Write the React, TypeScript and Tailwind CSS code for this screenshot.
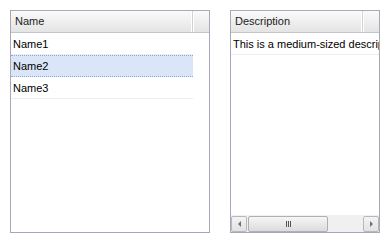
import React from "react";

const font = { fontFamily: '"Liberation Sans", Arial, sans-serif' };

const HeaderCell: React.FC<{ label: string; width: string }> = ({ label, width }) => (
  <div
    className={`${width} h-full shrink-0 flex items-center pl-[4px] border-r border-r-[#d0d0d8] text-[11px] text-[#222] shadow-[inset_-1px_0_0_#ffffff]`}
  >
    {label}
  </div>
);

const GridHeader: React.FC<{ label: string; width: string }> = ({ label, width }) => (
  <div className="h-[22px] shrink-0 flex border-b border-b-[#c4c4cc] bg-gradient-to-b from-[#fafafa] to-[#e4e4e4]">
    <HeaderCell label={label} width={width} />
    <div className="flex-1 border-l border-l-white" />
  </div>
);

const rows = ["Name1", "Name2", "Name3"];

export default function App() {
  return (
    <div className="w-[390px] h-[243px] bg-white flex gap-[20px] pt-[10px] pl-[10px]" style={font}>
      {/* Names grid */}
      <div className="w-[200px] h-[223px] border border-[#a8a8b8] flex flex-col overflow-hidden">
        <GridHeader label="Name" width="w-[182px]" />
        <div className="w-[182px]">
          {rows.map((r) => {
            const selected = r === "Name2";
            return (
              <div
                key={r}
                className={
                  selected
                    ? "h-[22px] flex items-center pl-[2px] text-[11px] text-black bg-[#dae6f8] border-y border-dotted border-[#8fa8d8]"
                    : "h-[22px] flex items-center pl-[2px] text-[11px] text-black border-t border-t-white border-b border-b-[#ededed]"
                }
              >
                {r}
              </div>
            );
          })}
        </div>
      </div>

      {/* Description grid */}
      <div className="w-[150px] h-[223px] border border-[#a8a8b8] flex flex-col overflow-hidden">
        <GridHeader label="Description" width="w-[132px]" />
        <div className="h-[22px] flex items-center pl-[2px] text-[11px] text-black whitespace-nowrap overflow-hidden border-t border-t-white border-b border-b-[#ededed]">
          This is a medium-sized description
        </div>
        <div className="flex-1" />
        {/* horizontal scrollbar */}
        <div className="h-[17px] shrink-0 flex bg-[#f0f0f0] border-t border-t-[#f0f0f0]">
          <div className="w-[16px] h-full border border-[#b8b8b8] rounded-[2px] bg-gradient-to-b from-[#f4f4f4] to-[#e2e2e2] flex items-center justify-center">
            <svg width="3" height="6" viewBox="0 0 3 6">
              <path d="M3 0 L0 3 L3 6 Z" fill="#707070" />
            </svg>
          </div>
          <div className="ml-[1px] w-[80px] h-full border border-[#b0b0b0] rounded-[2px] bg-gradient-to-b from-[#f6f6f6] to-[#dcdcdc] flex items-center justify-center gap-[1px]">
            <span className="w-[1px] h-[6px] bg-[#555]" />
            <span className="w-[1px] h-[6px] bg-[#555]" />
            <span className="w-[1px] h-[6px] bg-[#555]" />
          </div>
          <div className="flex-1" />
          <div className="w-[16px] h-full border border-[#b8b8b8] rounded-[2px] bg-gradient-to-b from-[#f4f4f4] to-[#e2e2e2] flex items-center justify-center">
            <svg width="3" height="6" viewBox="0 0 3 6">
              <path d="M0 0 L3 3 L0 6 Z" fill="#707070" />
            </svg>
          </div>
        </div>
      </div>
    </div>
  );
}
